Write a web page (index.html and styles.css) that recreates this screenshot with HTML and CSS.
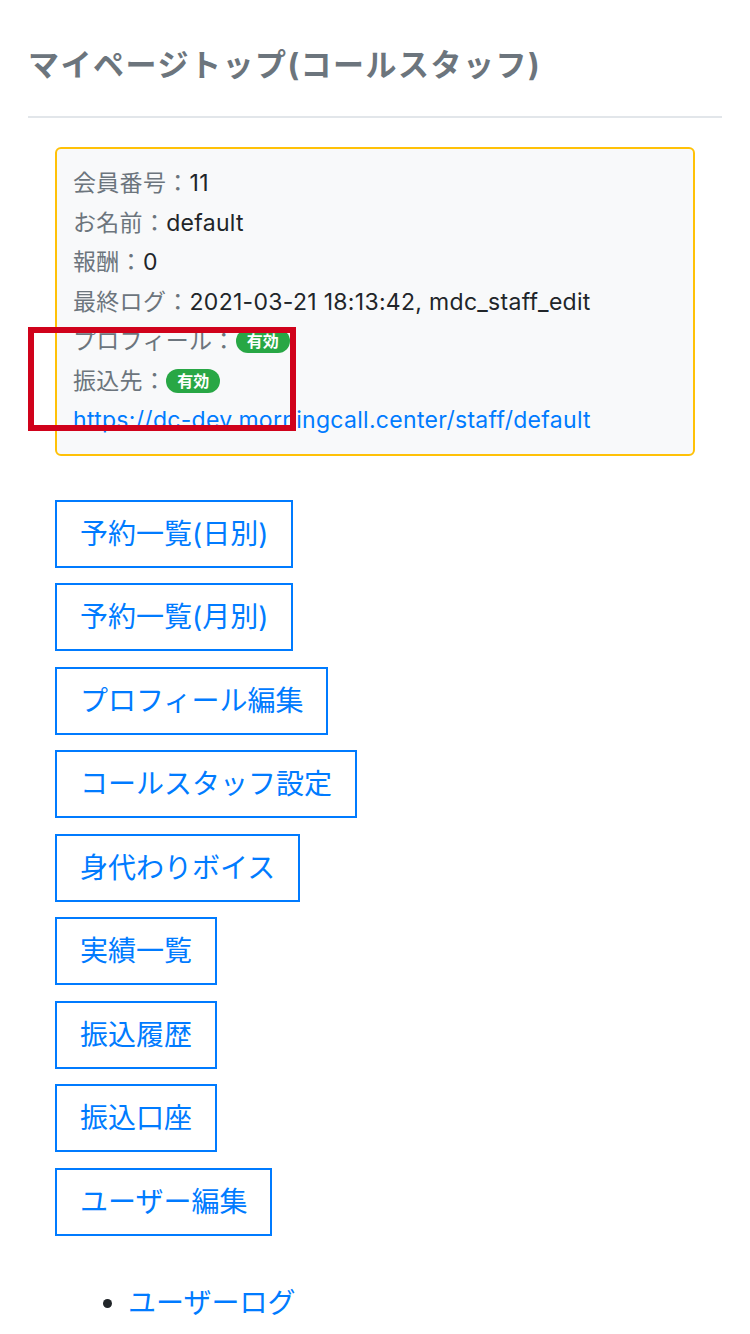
FILE: index.html
```html
<!DOCTYPE html>
<html>
<head>
  <meta charset="utf-8">
  <title>マイページトップ(コールスタッフ)</title>
  <link rel="stylesheet" href="styles.css">
</head>
<body>
  <div class="container">
    <h1 class="page-title">マイページトップ(コールスタッフ)</h1>
    <hr class="divider">

    <div class="info-card">
      <div class="info-row"><span class="label">会員番号：</span>11</div>
      <div class="info-row"><span class="label">お名前：</span>default</div>
      <div class="info-row"><span class="label">報酬：</span>0</div>
      <div class="info-row"><span class="label">最終ログ：</span>2021-03-21 18:13:42, mdc_staff_edit</div>
      <div class="info-row"><span class="label">プロフィール：</span><span class="badge">有効</span></div>
      <div class="info-row"><span class="label">振込先：</span><span class="badge">有効</span></div>
      <div class="info-row"><a href="#" class="info-link">https://dc-dev.morningcall.center/staff/default</a></div>
    </div>

    <div class="menu">
      <a href="#" class="menu-btn">予約一覧(日別)</a>
      <a href="#" class="menu-btn">予約一覧(月別)</a>
      <a href="#" class="menu-btn">プロフィール編集</a>
      <a href="#" class="menu-btn">コールスタッフ設定</a>
      <a href="#" class="menu-btn">身代わりボイス</a>
      <a href="#" class="menu-btn">実績一覧</a>
      <a href="#" class="menu-btn">振込履歴</a>
      <a href="#" class="menu-btn">振込口座</a>
      <a href="#" class="menu-btn">ユーザー編集</a>
    </div>

    <ul class="link-list">
      <li><a href="#">ユーザーログ</a></li>
    </ul>
  </div>

  <div class="highlight"></div>
</body>
</html>
```

FILE: styles.css
```css
body {
  margin: 0;
  padding: 0;
  background-color: #fff;
  font-family: Inter, "Noto Sans CJK JP", sans-serif;
  color: #212529;
}

.container {
  padding: 0 28px;
}

.page-title {
  margin: 0;
  padding-top: 40px;
  font-size: 31px;
  line-height: 50px;
  font-weight: bold;
  letter-spacing: 1.5px;
  color: #6c757d;
}

.divider {
  margin: 26px 0 29px;
  border: none;
  border-top: 2px solid #e2e6ea;
}

.info-card {
  margin: 0 27px;
  padding: 15px 16px 13px;
  background-color: #f8f9fa;
  border: 2px solid #ffc107;
  border-radius: 6px;
  font-size: 23px;
  letter-spacing: 0.3px;
}

.info-row {
  line-height: 39.5px;
  height: 39.5px;
}

.label {
  color: #6c757d;
}

.badge {
  display: inline-block;
  padding: 0 11px;
  height: 24px;
  line-height: 24px;
  border-radius: 12px;
  background-color: #28a745;
  color: #fff;
  font-size: 16px;
  font-weight: bold;
  letter-spacing: 0;
  vertical-align: 2px;
}

.info-link {
  color: #007bff;
  text-decoration: none;
}

.menu {
  margin: 44px 27px 0;
  display: flex;
  flex-direction: column;
  align-items: flex-start;
  gap: 15.5px;
}

.menu-btn {
  display: block;
  padding: 11px 23px;
  line-height: 42px;
  font-size: 28px;
  color: #007bff;
  border: 2px solid #007bff;
  text-decoration: none;
}

.link-list {
  margin: 46px 0 0;
  padding-left: 100px;
  font-size: 28px;
  line-height: 42px;
}

.link-list a {
  color: #007bff;
  text-decoration: none;
}

.highlight {
  position: absolute;
  top: 327px;
  left: 28px;
  width: 256px;
  height: 92px;
  border: 6px solid #d0021b;
}
```
